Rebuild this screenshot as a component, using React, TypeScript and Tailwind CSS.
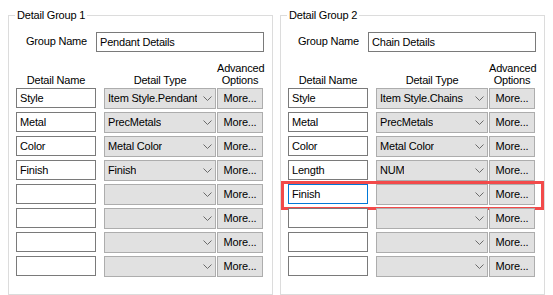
import React from "react";

type Row = { name: string; type: string; focused?: boolean; highlight?: boolean };

const Chevron = () => (
  <svg width="9" height="5" viewBox="0 0 9 5" className="ml-auto mr-[3px] shrink-0">
    <path d="M0.5 0.5 L4.5 4.5 L8.5 0.5" fill="none" stroke="#6a6a6a" strokeWidth="1" />
  </svg>
);

function Group({ title, groupName, rows }: { title: string; groupName: string; rows: Row[] }) {
  return (
    <fieldset className="mt-[7px] w-[265px] min-w-0 border border-[#dcdcdc] px-[7px] pb-[11px]">
      <legend className="-ml-[1px] px-[2px] leading-[16px]">{title}</legend>
      <div className="mt-[9px] flex h-[20px] items-center">
        <div className="w-[80px] shrink-0 pl-[10px] -mt-[2px]">Group Name</div>
        <div className="flex h-[20px] w-[168px] items-center border border-[#7a7a7a] bg-white px-[3px]">
          {groupName}
        </div>
      </div>
      <div className="mt-[10px] flex items-end leading-[12px]">
        <div className="w-[80px] shrink-0 text-center">Detail Name</div>
        <div className="ml-[8px] w-[112px] shrink-0 text-center">Detail Type</div>
        <div className="ml-[1px] w-[46px] shrink-0 text-center">
          Advanced
          <br />
          Options
        </div>
      </div>
      <div className="mt-[2px] flex flex-col gap-[4px]">
        {rows.map((r, i) => (
          <div key={i} className="relative flex h-[20px] items-center">
            <div
              className={
                r.focused
                  ? "flex h-[20px] w-[80px] shrink-0 items-center border border-[#0078d7] bg-white px-[3px]"
                  : "flex h-[20px] w-[80px] shrink-0 items-center border border-[#7a7a7a] bg-white px-[3px]"
              }
            >
              {r.name}
            </div>
            <div className="ml-[8px] flex h-[21px] w-[112px] shrink-0 items-center border border-[#adadad] bg-[#e1e1e1] pl-[3px]">
              <span className="overflow-hidden whitespace-nowrap">{r.type}</span>
              <Chevron />
            </div>
            <div className="ml-[1px] flex h-[21px] w-[46px] shrink-0 items-center justify-center border border-[#adadad] bg-[#e1e1e1]">
              More...
            </div>
            {r.highlight && (
              <div className="pointer-events-none absolute top-[-3px] bottom-[-6px] left-[-7px] right-[-7px] border-[3px] border-[#f24a4a]" />
            )}
          </div>
        ))}
      </div>
    </fieldset>
  );
}

export default function App() {
  const rows1: Row[] = [
    { name: "Style", type: "Item Style.Pendant" },
    { name: "Metal", type: "PrecMetals" },
    { name: "Color", type: "Metal Color" },
    { name: "Finish", type: "Finish" },
    { name: "", type: "" },
    { name: "", type: "" },
    { name: "", type: "" },
    { name: "", type: "" },
  ];
  const rows2: Row[] = [
    { name: "Style", type: "Item Style.Chains" },
    { name: "Metal", type: "PrecMetals" },
    { name: "Color", type: "Metal Color" },
    { name: "Length", type: "NUM" },
    { name: "Finish", type: "", focused: true, highlight: true },
    { name: "", type: "" },
    { name: "", type: "" },
    { name: "", type: "" },
  ];
  return (
    <div className="flex h-[295px] w-[553px] gap-[7px] overflow-hidden bg-white pl-[8px] font-['Liberation_Sans',Arial,sans-serif] text-[11px] tracking-[-0.2px] text-black">
      <Group title="Detail Group 1" groupName="Pendant Details" rows={rows1} />
      <Group title="Detail Group 2" groupName="Chain Details" rows={rows2} />
    </div>
  );
}
